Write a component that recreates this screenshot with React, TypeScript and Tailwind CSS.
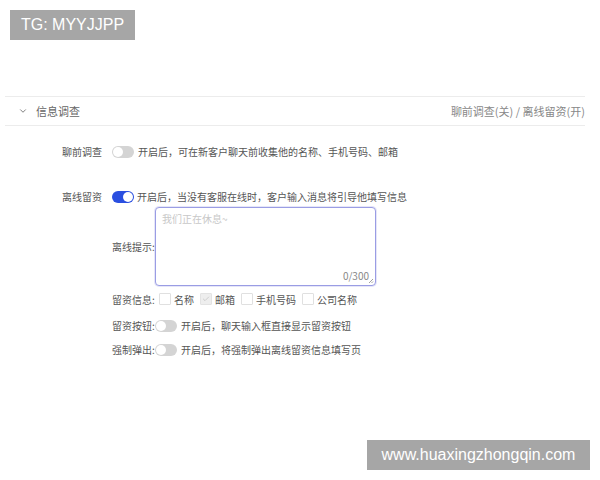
import { ChevronDown, Check } from 'lucide-react'

function Toggle({ on = false }: { on?: boolean }) {
  return (
    <span
      className={
        'relative inline-flex h-[12px] w-[22px] flex-shrink-0 rounded-full ' +
        (on ? 'bg-[#2a4fe0]' : 'bg-[#d4d4d4]')
      }
    >
      <span
        className={
          'absolute top-[1px] h-[10px] w-[10px] rounded-full bg-white ' +
          (on ? 'right-[1px]' : 'left-[1px]')
        }
      />
    </span>
  )
}

function Box({ checked = false }: { checked?: boolean }) {
  return (
    <span
      className={
        'flex h-[12px] w-[12px] flex-shrink-0 items-center justify-center rounded-[1px] border ' +
        (checked ? 'border-[#e3e3e3] bg-[#eeeeee]' : 'border-[#e0e0e0] bg-white')
      }
    >
      {checked && <Check className="h-[8px] w-[8px] text-[#bdbdbd]" strokeWidth={2} />}
    </span>
  )
}

export default function App() {
  const fields = [
    { name: '名称', checked: false },
    { name: '邮箱', checked: true },
    { name: '手机号码', checked: false },
    { name: '公司名称', checked: false },
  ]

  return (
    <div
      className="relative h-[480px] w-[600px] overflow-hidden bg-white text-[10px] text-[#555]"
      style={{ fontFamily: '"Noto Sans CJK SC", "Noto Sans", sans-serif' }}
    >
      <div className="absolute left-[10px] top-[10px] flex h-[30px] w-[125px] items-center justify-center bg-[#a6a6a6] text-[16px] text-white" style={{ fontFamily: '"Liberation Sans", Arial, sans-serif' }}>
        TG: MYYJJPP
      </div>

      <div className="px-[5px] pt-[96px] pr-[15px]">
        <div className="flex h-[30px] items-center border-y border-[#ececec] text-[11px]">
          <ChevronDown className="ml-[13px] h-[10px] w-[10px] text-[#666]" strokeWidth={2} />
          <span className="ml-[8px] text-[#666]">信息调查</span>
          <span className="ml-auto text-[#888]">聊前调查(关) / 离线留资(开)</span>
        </div>

        <div className="mt-[18px] flex items-center">
          <span className="w-[107px] pr-[10px] text-right">聊前调查</span>
          <Toggle />
          <span className="ml-[4px]">开启后，可在新客户聊天前收集他的名称、手机号码、邮箱</span>
        </div>

        <div className="mt-[30px] flex items-center">
          <span className="w-[107px] pr-[10px] text-right">离线留资</span>
          <Toggle on />
          <span className="ml-[3px]">开启后，当没有客服在线时，客户输入消息将引导他填写信息</span>
        </div>

        <div className="ml-[107px] mt-[3px] flex items-center">
          <span className="w-[43px]">离线提示:</span>
          <div className="relative h-[79px] w-[221px] rounded-[4px] border border-[#9a9de4] bg-white shadow-[0_0_0_1px_rgba(154,157,228,0.25)]">
            <span className="absolute left-[6px] top-[3px] text-[#c8c8c8]">我们正在休息~</span>
            <span className="absolute bottom-[2px] right-[6px] text-[#888]">0/300</span>
            <svg className="absolute bottom-[1px] right-[1px]" width="6" height="6" viewBox="0 0 6 6">
              <path d="M1 5 L5 1 M3.5 5 L5 3.5" stroke="#888" strokeWidth="0.8" />
            </svg>
          </div>
        </div>

        <div className="ml-[107px] mt-[6px] flex h-[14px] items-center">
          <span className="w-[47px]">留资信息:</span>
          {fields.map((f) => (
            <span key={f.name} className="mr-[6px] flex items-center gap-[3px]">
              <Box checked={f.checked} />
              <span>{f.name}</span>
            </span>
          ))}
        </div>

        <div className="ml-[107px] mt-[12px] flex items-center">
          <span className="w-[43px]">留资按钮:</span>
          <Toggle />
          <span className="ml-[4px]">开启后，聊天输入框直接显示留资按钮</span>
        </div>

        <div className="ml-[107px] mt-[9px] flex items-center">
          <span className="w-[43px]">强制弹出:</span>
          <Toggle />
          <span className="ml-[4px]">开启后，将强制弹出离线留资信息填写页</span>
        </div>
      </div>

      <div className="absolute left-[367px] top-[440px] flex h-[30px] w-[223px] items-center justify-center bg-[#a6a6a6] text-[16px] text-white" style={{ fontFamily: '"Liberation Sans", Arial, sans-serif' }}>
        www.huaxingzhongqin.com
      </div>
    </div>
  )
}
